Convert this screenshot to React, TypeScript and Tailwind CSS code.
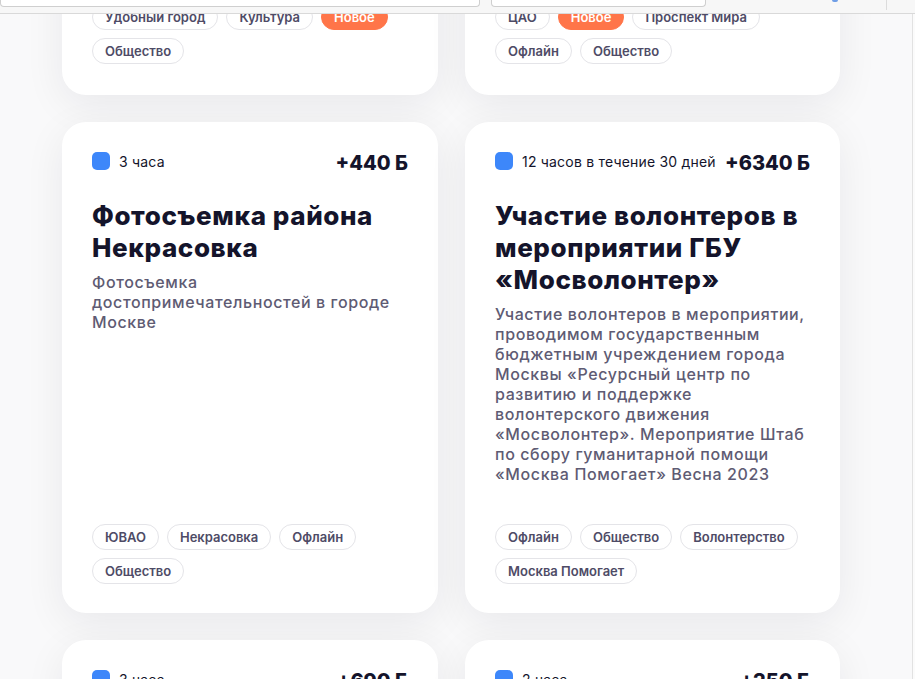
import React from 'react';

type Task = {
    id: number;
    duration: string;
    points: string;
    title: string;
    text: string;
    tags: string[];
};

const topRow: Task[] = [
    {
        id: 1,
        duration: '2 часа',
        points: '+300 Б',
        title: 'Экскурсия по району',
        text: 'Прогулка по историческим местам города',
        tags: ['Удобный город', 'Культура', 'Новое', 'Общество'],
    },
    {
        id: 2,
        duration: '4 часа',
        points: '+520 Б',
        title: 'Субботник на Проспекте Мира',
        text: 'Уборка общественных пространств',
        tags: ['ЦАО', 'Новое', 'Проспект Мира', 'Офлайн', 'Общество'],
    },
];

const midRow: Task[] = [
    {
        id: 3,
        duration: '3 часа',
        points: '+440 Б',
        title: 'Фотосъемка района Некрасовка',
        text: 'Фотосъемка достопримечательностей в городе Москве',
        tags: ['ЮВАО', 'Некрасовка', 'Офлайн', 'Общество'],
    },
    {
        id: 4,
        duration: '12 часов в течение 30 дней',
        points: '+6340 Б',
        title: 'Участие волонтеров в мероприятии ГБУ «Мосволонтер»',
        text: 'Участие волонтеров в мероприятии, проводимом государственным бюджетным учреждением города Москвы «Ресурсный центр по развитию и поддержке волонтерского движения «Мосволонтер». Мероприятие Штаб по сбору гуманитарной помощи «Москва Помогает» Весна 2023',
        tags: ['Офлайн', 'Общество', 'Волонтерство', 'Москва Помогает'],
    },
];

const bottomRow: Task[] = [
    {
        id: 5,
        duration: '3 часа',
        points: '+690 Б',
        title: 'Помощь в организации выставки',
        text: 'Встреча гостей и навигация по площадке',
        tags: ['ЦАО', 'Культура'],
    },
    {
        id: 6,
        duration: '2 часа',
        points: '+250 Б',
        title: 'Озеленение двора',
        text: 'Посадка деревьев и кустарников',
        tags: ['ЗАО', 'Экология'],
    },
];

const Tag = ({ label }: { label: string }) => {
    const isNew = label === 'Новое';
    return (
        <span
            className={`h-[26px] px-[12px] rounded-full text-[13px] font-semibold leading-none flex items-center ${
                isNew ? 'bg-[#ff7549] text-white border border-[#ff7549]' : 'bg-white text-[#4e4b66] border border-[#e4e4e8]'
            }`}
        >
            {label}
        </span>
    );
};

const TaskCard = ({ task, className }: { task: Task; className: string }) => (
    <div className={`${className} bg-white rounded-[24px] shadow-[0_10px_40px_rgba(20,20,43,0.07)] pt-[26px] px-[30px] flex flex-col`}>
        <div className="h-[26px] flex items-center justify-between gap-2">
            <div className="flex items-center gap-[9px]">
                <span className="w-[18px] h-[18px] rounded-[5px] bg-[#3d87fa] shrink-0"></span>
                <span className="text-[14px] tracking-[0.2px] text-[#14142b] whitespace-nowrap">{task.duration}</span>
            </div>
            <span className="text-[20px] leading-[26px] font-extrabold text-[#14142b] whitespace-nowrap mt-[3px]">{task.points}</span>
        </div>
        <h3 className="mt-[26px] text-[26px] leading-[32px] font-extrabold tracking-[0.6px] text-[#14142b]">{task.title}</h3>
        <p className="mt-[8px] text-[16px] leading-[20px] font-medium tracking-[0.6px] text-[#5e5b73]">{task.text}</p>
        <div className="mt-auto flex flex-wrap gap-x-[8px] gap-y-[8px]">
            {task.tags.map(t => (
                <Tag key={t} label={t} />
            ))}
        </div>
    </div>
);

const App = () => {
    return (
        <div className="w-[915px] h-[679px] overflow-hidden flex flex-col bg-[#f9f9fa] font-['Inter',sans-serif]">
            {/* browser toolbar edge */}
            <div className="h-[14px] shrink-0 bg-[#f7f7f7] border-b border-[#d9d9d9] flex items-start z-10">
                <div className="w-[480px] h-[7px] bg-white border border-t-0 border-[#cfcfcf] rounded-b-[4px]"></div>
                <div className="ml-[11px] w-[215px] h-[7px] bg-white border border-t-0 border-[#cfcfcf] rounded-b-[4px]"></div>
                <div className="ml-[126px] w-[6px] h-[2px] bg-[#6f9ee6] rounded-b"></div>
                <div className="ml-[48px] w-px h-[10px] bg-[#dcdcdc]"></div>
            </div>

            <div className="flex-1 flex min-h-0">
                <div className="flex-1 overflow-hidden">
                    <div className="-mt-[219px] pl-[62px] grid grid-cols-[376px_375px] gap-x-[27px] gap-y-[27px]">
                        {topRow.map(t => (
                            <TaskCard key={t.id} task={t} className="h-[300px] pb-[31px]" />
                        ))}
                        {midRow.map(t => (
                            <TaskCard key={t.id} task={t} className="h-[491px] pb-[29px]" />
                        ))}
                        {bottomRow.map(t => (
                            <TaskCard key={t.id} task={t} className="h-[300px] pb-[29px]" />
                        ))}
                    </div>
                </div>
                <div className="w-[3px] shrink-0 border-l border-[#e2e2e2] bg-[#fbfbfb]"></div>
            </div>
        </div>
    );
};

export default App;
